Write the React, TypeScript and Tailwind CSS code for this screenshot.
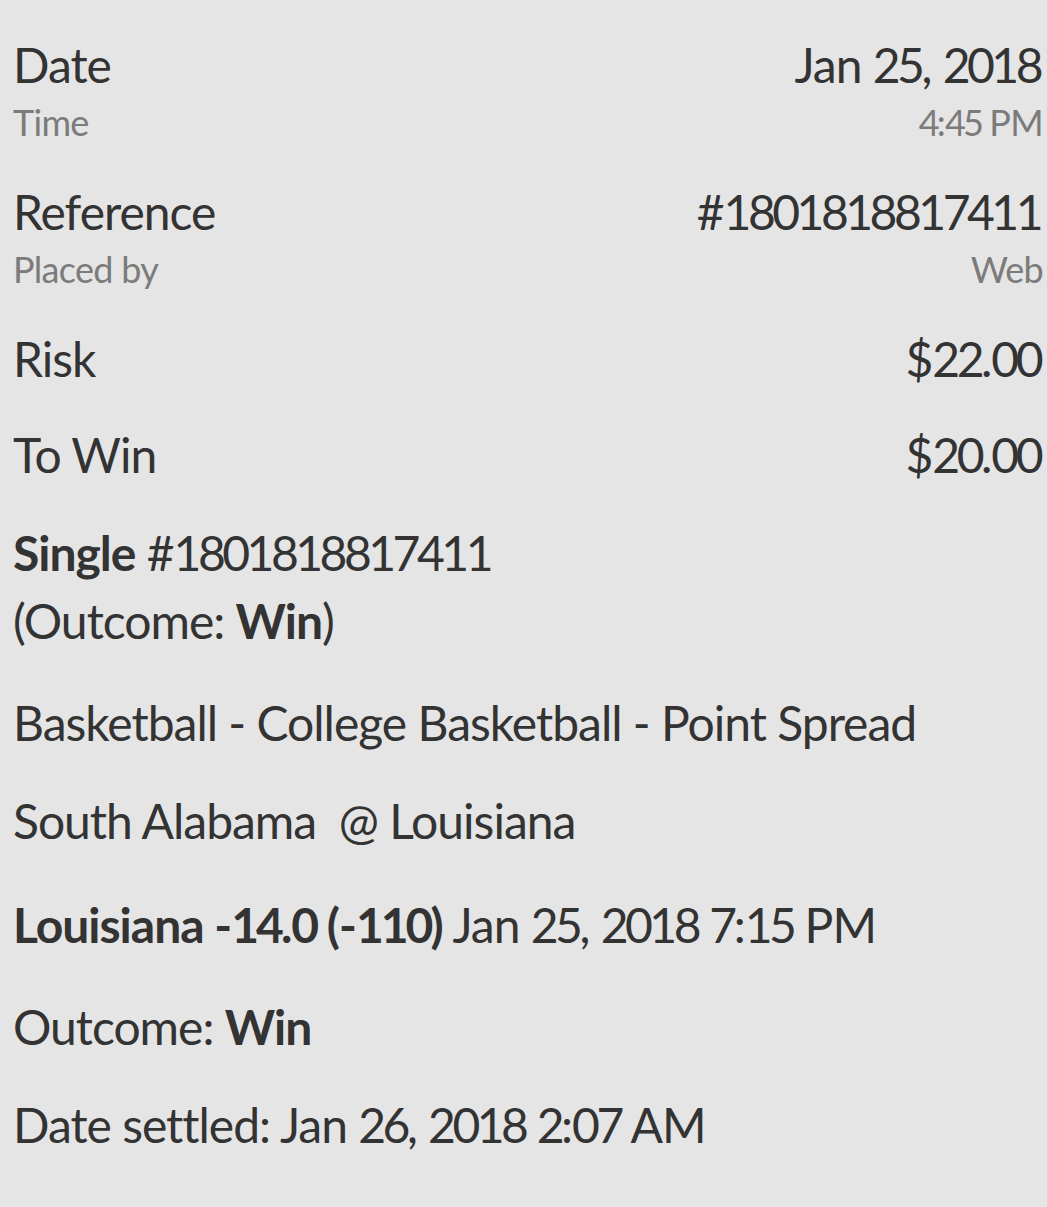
import React from 'react';

const font = { fontFamily: 'Lato, "Noto Sans", sans-serif' };

type Kind = 'lg' | 'sm' | 'bold';

const digitTracking: Record<Kind, string> = {
    lg: 'tracking-[-3.5px]',
    sm: 'tracking-[-3px]',
    bold: 'tracking-[-3px]',
};

// Lato's figures run wider than the narrow face in the screenshot, so pull digit runs in a little
const fit = (text: string, kind: Kind = 'lg') =>
    text.split(/(\d+)/).map((part, i) =>
        /\d/.test(part) ? (
            <span key={i} className={digitTracking[kind]}>
                {part}
            </span>
        ) : (
            part
        )
    );

interface RowProps {
    label: string;
    value: string;
    sub?: string;
    subValue?: string;
    className?: string;
}

const DetailRow = ({ label, value, sub, subValue, className = '' }: RowProps) => (
    <div className={className}>
        <div className="flex justify-between items-baseline text-[48px] leading-[56px] tracking-[-1px] text-[#333]">
            <span>{fit(label)}</span>
            <span className="mr-[3px]">{fit(value)}</span>
        </div>
        {sub && (
            <div className="mt-[3px] flex justify-between items-baseline text-[36px] leading-[52px] tracking-[-0.7px] text-[#7b7b7b]">
                <span>{fit(sub, 'sm')}</span>
                <span>{fit(subValue ?? '', 'sm')}</span>
            </div>
        )}
    </div>
);

export default function App() {
    return (
        <main className="min-h-[1207px] w-full bg-[#e5e5e5] pl-[13px] pr-[4px] pt-[37px]" style={font}>
            {/* Summary */}
            <DetailRow label="Date" value="Jan 25, 2018" sub="Time" subValue="4:45 PM" />
            <DetailRow className="mt-[36px]" label="Reference" value="#1801818817411" sub="Placed by" subValue="Web" />
            <DetailRow className="mt-[36px]" label="Risk" value="$22.00" />
            <DetailRow className="mt-[40px]" label="To Win" value="$20.00" />

            {/* Bet details */}
            <div className="text-[48px] tracking-[-1px] text-[#333]">
                <p className="mt-[36px] leading-[68px]">
                    <b className="font-bold">Single</b> {fit('#1801818817411')}
                    <br />
                    (Outcome: <b className="font-bold">Win</b>)
                </p>
                <p className="mt-[40px] leading-[56px]">Basketball - College Basketball - Point Spread</p>
                <p className="mt-[42px] leading-[56px]">South Alabama&nbsp; @ Louisiana</p>
                <p className="mt-[48px] leading-[56px]">
                    <b className="font-bold">{fit('Louisiana -14.0 (-110)', 'bold')}</b> {fit('Jan 25, 2018 7:15 PM')}
                </p>
                <p className="mt-[46px] leading-[56px]">
                    Outcome: <b className="font-bold">Win</b>
                </p>
                <p className="mt-[42px] leading-[56px]">{fit('Date settled: Jan 26, 2018 2:07 AM')}</p>
            </div>
        </main>
    );
}
